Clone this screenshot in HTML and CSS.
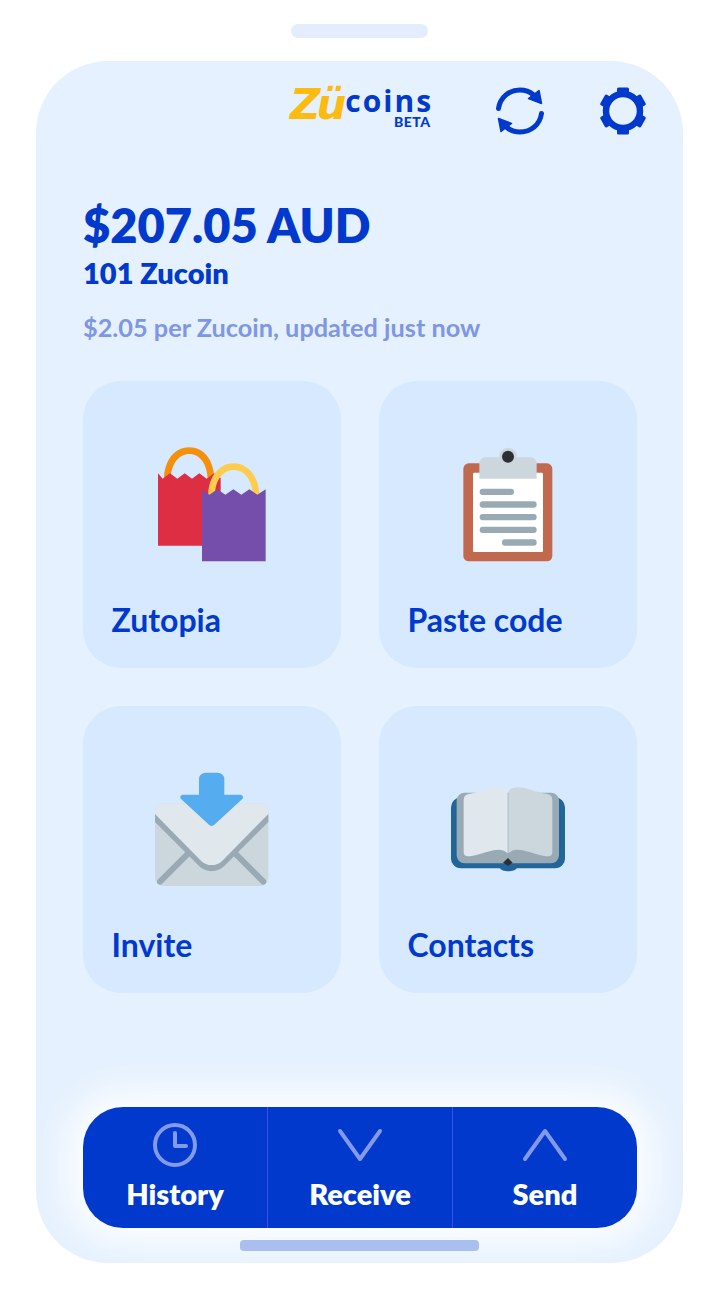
FILE: index.html
```html
<!DOCTYPE html>
<html lang="en">
<head>
    <meta charset="UTF-8">
    <meta name="viewport" content="width=device-width, initial-scale=1.0">
    <title>Zucoins</title>
    <link rel="stylesheet" href="styles.css">
</head>
<body>
    <div class="notch"></div>
    <div class="phone">
        <div class="topbar">
            <div class="logo">
                <div class="logo-word"><span class="logo-zu">Zü</span><span class="logo-coins">coins</span></div>
                <div class="logo-beta">BETA</div>
            </div>
            <svg class="top-icon refresh-icon" width="54" height="54" viewBox="0 0 54 54" fill="none">
                <path d="M5.500 24.500C7 13.500 16 6 27 6c5 0 9.500 1.500 13 4.500" stroke="#0039cb" stroke-width="5" stroke-linecap="round"/>
                <path d="M48.500 29.500C47 40.500 38 48 27 48c-5 0-9.500-1.500-13-4.500" stroke="#0039cb" stroke-width="5" stroke-linecap="round"/>
                <path d="M35.500 14.500 46 6.500 48.500 19.500Z" fill="#0039cb" stroke="#0039cb" stroke-width="1.500" stroke-linejoin="round"/>
                <path d="M18.500 39.500 8 47.500 5.500 34.500Z" fill="#0039cb" stroke="#0039cb" stroke-width="1.500" stroke-linejoin="round"/>
            </svg>
            <svg class="top-icon gear-icon" width="54" height="54" viewBox="0 0 54 54" fill="none">
                <circle cx="27" cy="27" r="17" stroke="#0039cb" stroke-width="6.500"/>
                <g fill="#0039cb">
                    <rect x="21" y="3.500" width="12" height="9" rx="1.500"/>
                    <rect x="21" y="3.500" width="12" height="9" rx="1.500" transform="rotate(60 27 27)"/>
                    <rect x="21" y="3.500" width="12" height="9" rx="1.500" transform="rotate(120 27 27)"/>
                    <rect x="21" y="3.500" width="12" height="9" rx="1.500" transform="rotate(180 27 27)"/>
                    <rect x="21" y="3.500" width="12" height="9" rx="1.500" transform="rotate(240 27 27)"/>
                    <rect x="21" y="3.500" width="12" height="9" rx="1.500" transform="rotate(300 27 27)"/>
                </g>
            </svg>
        </div>

        <div class="balance">
            <div class="balance-amount">$207.05 AUD</div>
            <div class="balance-coins">101 Zucoin</div>
            <div class="balance-rate">$2.05 per Zucoin, updated just now</div>
        </div>

        <div class="cards">
            <div class="card">
                <svg class="card-icon" width="160" height="150" viewBox="0 0 480 450">
                    <path d="M102 150C102 90 135 52 178 52s75 38 75 98h-20c0-48-24-78-55-78s-56 30-56 78Z" fill="#f4900c"/>
                    <path d="M84 130l14 16 22-16 22 16 22-16 22 16 22-16 22 16 22-16 20 14V347H84Z" fill="#dd2e44"/>
                    <path d="M235 195C235 140 268 100 311 100s77 40 77 95h-20c0-44-25-75-57-75s-56 31-56 75Z" fill="#ffcc4d"/>
                    <path d="M216 180l22 14 24-16 24 16 24-16 24 16 24-16 24 16 25-16V394H216Z" fill="#744eaa"/>
                </svg>
                <div class="card-label">Zutopia</div>
            </div>
            <div class="card">
                <svg class="card-icon" width="140" height="150" viewBox="0 0 420 450">
                    <rect x="70" y="100" width="267" height="294" rx="16" fill="#c1694f"/>
                    <rect x="99" y="128" width="210" height="238" rx="4" fill="#fff"/>
                    <circle cx="204" cy="80" r="27" fill="#ccd6dd"/>
                    <path d="M118 100a18 18 0 0 1 18-18h136a18 18 0 0 1 18 18v46H118Z" fill="#ccd6dd"/>
                    <circle cx="204" cy="80" r="18" fill="#292f33"/>
                    <g fill="#99aab5">
                        <rect x="119" y="176" width="103" height="19" rx="9"/>
                        <rect x="119" y="214" width="171" height="19" rx="9"/>
                        <rect x="119" y="252" width="171" height="19" rx="9"/>
                        <rect x="119" y="290" width="171" height="19" rx="9"/>
                        <rect x="186" y="328" width="104" height="19" rx="9"/>
                    </g>
                </svg>
                <div class="card-label">Paste code</div>
            </div>
            <div class="card">
                <svg class="card-icon" width="150" height="140" viewBox="0 0 450 420">
                    <rect x="60" y="130" width="340" height="248" rx="25" fill="#ccd6dd"/>
                    <path d="M75 365 165 275M385 365 295 275" stroke="#99aab5" stroke-width="18" stroke-linecap="round"/>
                    <path d="M85 130H375a25 25 0 0 1 25 25v15L262 310a45 45 0 0 1-64 0L60 170v-15a25 25 0 0 1 25-25Z" fill="#e1e8ed"/>
                    <path d="M60 162 198 302a45 45 0 0 0 64 0L400 162v24L268 318a54 54 0 0 1-76 0L60 186Z" fill="#99aab5"/>
                    <path d="M192 58a20 20 0 0 1 20-20h36a20 20 0 0 1 20 20v46h46c10 0 13 8 7 14l-83 76a12 12 0 0 1-16 0l-83-76c-6-6-3-14 7-14h46Z" fill="#55acee"/>
                </svg>
                <div class="card-label">Invite</div>
            </div>
            <div class="card">
                <svg class="card-icon" width="150" height="120" viewBox="0 0 450 360">
                    <path d="M78 82H360a30 30 0 0 1 30 30V262a30 30 0 0 1-30 33H245c-5 12-45 12-50 0H78a30 30 0 0 1-30-33V112a30 30 0 0 1 30-30Z" fill="#226699"/>
                    <rect x="65" y="68" width="307" height="212" rx="24" fill="#99aab5"/>
                    <path d="M86 90c0-10 5-16 15-18 35-4 60-20 90-20 16 0 27 6 27 20V250c-15-15-35-12-60-5-25 7-45 14-60 14-7 0-12-5-12-14Z" fill="#e1e8ed"/>
                    <path d="M352 90c0-10-5-16-15-18-35-4-60-20-90-20-16 0-27 6-27 20V250c15-15 35-12 60-5 25 7 45 14 60 14 7 0 12-5 12-14Z" fill="#ccd6dd"/>
                    <path d="M219 264l14 14-14 9-15-9Z" fill="#292f33"/>
                </svg>
                <div class="card-label">Contacts</div>
            </div>
        </div>

        <div class="nav">
            <div class="nav-item">
                <svg width="46" height="46" viewBox="0 0 46 46" fill="none" stroke="#8499e8" stroke-width="4" stroke-linecap="round" stroke-linejoin="round">
                    <circle cx="23" cy="23" r="20"/>
                    <path d="M23 11V24H34"/>
                </svg>
                <div class="nav-label">History</div>
            </div>
            <div class="nav-item">
                <svg width="46" height="46" viewBox="0 0 46 46" fill="none" stroke="#8499e8" stroke-width="4" stroke-linecap="round" stroke-linejoin="round">
                    <path d="M3 9 23 37 43 9"/>
                </svg>
                <div class="nav-label">Receive</div>
            </div>
            <div class="nav-item">
                <svg width="46" height="46" viewBox="0 0 46 46" fill="none" stroke="#8499e8" stroke-width="4" stroke-linecap="round" stroke-linejoin="round">
                    <path d="M3 37 23 9 43 37"/>
                </svg>
                <div class="nav-label">Send</div>
            </div>
        </div>
        <div class="home-bar"></div>
    </div>
</body>
</html>
```

FILE: styles.css
```css
body {
    margin: 0;
    background-color: #fff;
    font-family: "Lato", "Noto Sans", sans-serif;
    color: #0039cb;
}
.notch {
    width: 137px;
    height: 14px;
    margin: 24px 0 0 291px;
    background-color: #e3edfd;
    border-radius: 7px;
}
.phone {
    position: relative;
    box-sizing: border-box;
    width: 647px;
    height: 1202px;
    margin: 23px 0 0 36px;
    padding: 0 46px 0 47px;
    background-color: #e5f1fe;
    border-radius: 72px;
    overflow: hidden;
}
.topbar {
    display: flex;
    align-items: center;
    height: 100px;
    padding-left: 207px;
}
.logo {
    width: 144px;
    margin-bottom: 6px;
    line-height: 1;
}
.logo-word {
    display: flex;
    align-items: flex-end;
    height: 34px;
}
.logo-zu {
    font-family: "DejaVu Sans", sans-serif;
    font-size: 42px;
    font-weight: bold;
    font-style: italic;
    color: #fdbb11;
    letter-spacing: -4px;
    line-height: 34px;
}
.logo-coins {
    font-family: "Open Sans", sans-serif;
    font-size: 30px;
    font-weight: 700;
    color: #0039cb;
    letter-spacing: 2px;
    line-height: 26px;
    margin: 0 0 8px 3px;
}
.logo-beta {
    margin: -6px 0 0 104px;
    font-size: 14px;
    font-weight: 900;
    letter-spacing: 0.5px;
    line-height: 12px;
}
.top-icon {
    flex: none;
}
.refresh-icon {
    margin-left: 60px;
}
.gear-icon {
    margin-left: 49px;
}
.balance {
    padding-top: 35px;
}
.balance-amount {
    font-size: 47px;
    font-weight: 800;
    line-height: 58px;
}
.balance-coins {
    font-size: 29px;
    font-weight: 800;
    line-height: 36px;
    margin-top: 1px;
}
.balance-rate {
    font-size: 25.3px;
    font-weight: 700;
    line-height: 30px;
    margin-top: 21px;
    color: #7f96e3;
}
.cards {
    display: grid;
    grid-template-columns: 258px 258px;
    grid-auto-rows: 287px;
    gap: 38px;
    margin-top: 39px;
}
.card {
    display: flex;
    flex-direction: column;
    background-color: #d6e9fe;
    border-radius: 38px;
    padding: 0 28.500px;
    position: relative;
}
.card-icon {
    position: absolute;
}
.card:nth-child(1) .card-icon {
    left: 47px;
    top: 49px;
}
.card:nth-child(2) .card-icon {
    left: 61px;
    top: 49px;
}
.card:nth-child(3) .card-icon {
    left: 52px;
    top: 54px;
}
.card:nth-child(4) .card-icon {
    left: 56px;
    top: 64px;
}
.card-label {
    margin-top: auto;
    padding-bottom: 30px;
    font-size: 32px;
    font-weight: 700;
    line-height: 36px;
}
.nav {
    position: absolute;
    left: 47px;
    top: 1046px;
    display: grid;
    grid-template-columns: 184px 185px 185px;
    width: 554px;
    height: 121px;
    background-color: #0039cb;
    border-radius: 40px;
    box-shadow: 0 0 40px 14px #fff;
}
.nav-item {
    display: flex;
    flex-direction: column;
    align-items: center;
    padding-top: 15px;
    color: #fff;
    border-left: 1px solid #3d4fe8;
}
.nav-item:first-child {
    border-left: none;
}
.nav-label {
    font-size: 29px;
    font-weight: 800;
    line-height: 34px;
    margin-top: 9px;
}
.home-bar {
    position: absolute;
    left: 204px;
    top: 1179px;
    width: 239px;
    height: 11px;
    background-color: #a8bff0;
    border-radius: 4px;
}
```
